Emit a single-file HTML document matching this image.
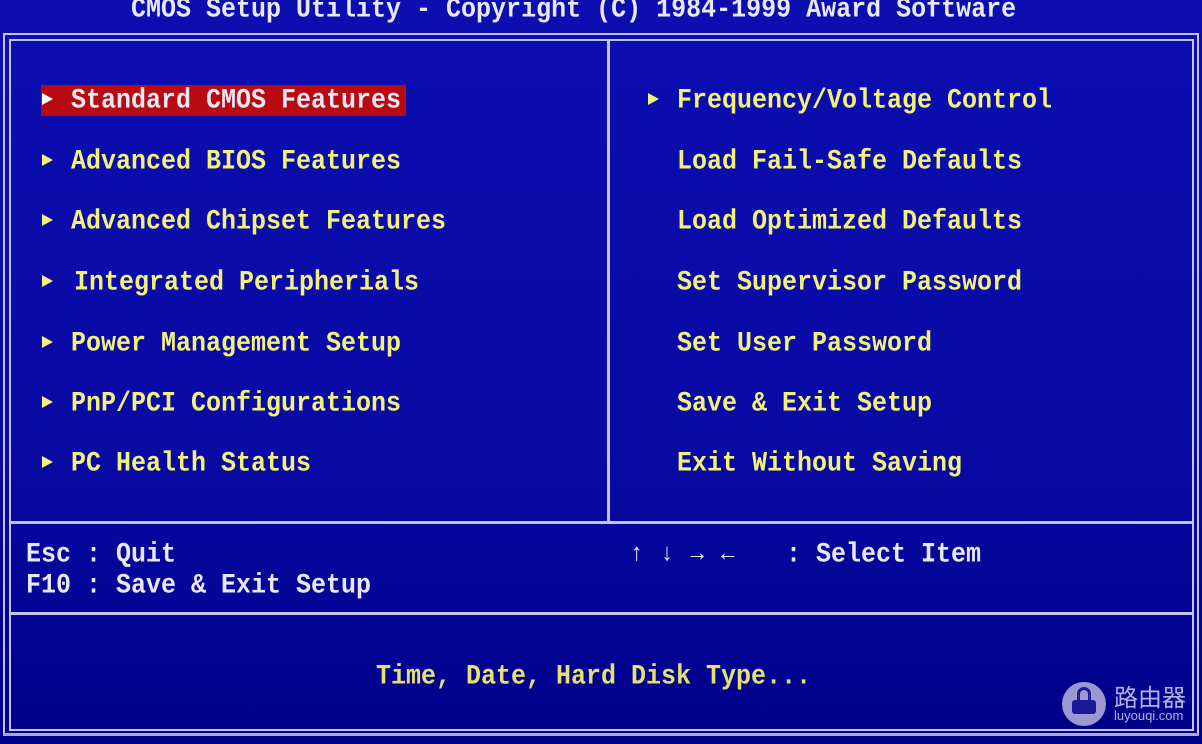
<!DOCTYPE html>
<html><head><meta charset="utf-8"><style>
body{margin:0;width:1202px;height:744px;overflow:hidden;background:linear-gradient(#0c0eb0,#0a0aa4 60%,#00008a);position:relative;font-family:"Liberation Mono",monospace;font-weight:bold;font-size:25px;}
.t{position:absolute;white-space:pre;line-height:30px;color:#f2f27a;transform:scaleY(1.12);margin-top:2px;}
.w{color:#e8e8f4;}
.l{position:absolute;background:#c4c4e4;}
.ar{position:absolute;width:0;height:0;border-top:6px solid transparent;border-bottom:6px solid transparent;border-left:11px solid #f2f27a;}
</style></head><body>
<div class="t w" style="left:131px;top:-7px">CMOS Setup Utility - Copyright (C) 1984-1999 Award Software</div>
<div class="l" style="left:3px;top:33px;width:1196px;height:2px"></div>
<div class="l" style="left:3px;top:33px;width:2px;height:702px"></div>
<div class="l" style="left:1197px;top:33px;width:2px;height:702px"></div>
<div class="l" style="left:3px;top:733px;width:1196px;height:3px;background:#a8a8c8"></div>
<div class="l" style="left:9px;top:39px;width:1184px;height:2px"></div>
<div class="l" style="left:9px;top:39px;width:2px;height:692px"></div>
<div class="l" style="left:1192px;top:39px;width:2px;height:692px"></div>
<div class="l" style="left:9px;top:729px;width:1185px;height:2px"></div>
<div class="l" style="left:607px;top:39px;width:3px;height:484px"></div>
<div class="l" style="left:9px;top:521px;width:1185px;height:3px"></div>
<div class="l" style="left:9px;top:612px;width:1185px;height:3px"></div>
<div style="position:absolute;left:41px;top:85px;width:365px;height:31px;background:#b80a10"></div>
<div class="ar" style="left:42px;top:93px;border-left-color:#fff"></div>
<div class="t w" style="left:71px;top:84px">Standard CMOS Features</div>
<div class="ar" style="left:42px;top:154px"></div><div class="t" style="left:71px;top:145px">Advanced BIOS Features</div>
<div class="ar" style="left:42px;top:214px"></div><div class="t" style="left:71px;top:205px">Advanced Chipset Features</div>
<div class="ar" style="left:42px;top:275px"></div><div class="t" style="left:74px;top:266px">Integrated Peripherials</div>
<div class="ar" style="left:42px;top:336px"></div><div class="t" style="left:71px;top:327px">Power Management Setup</div>
<div class="ar" style="left:42px;top:396px"></div><div class="t" style="left:71px;top:387px">PnP/PCI Configurations</div>
<div class="ar" style="left:42px;top:456px"></div><div class="t" style="left:71px;top:447px">PC Health Status</div>
<div class="ar" style="left:648px;top:93px"></div><div class="t" style="left:677px;top:84px">Frequency/Voltage Control</div>
<div class="t" style="left:677px;top:145px">Load Fail-Safe Defaults</div>
<div class="t" style="left:677px;top:205px">Load Optimized Defaults</div>
<div class="t" style="left:677px;top:266px">Set Supervisor Password</div>
<div class="t" style="left:677px;top:327px">Set User Password</div>
<div class="t" style="left:677px;top:387px">Save &amp; Exit Setup</div>
<div class="t" style="left:677px;top:447px">Exit Without Saving</div>
<div class="t w" style="left:26px;top:538px">Esc : Quit</div>
<div class="t w" style="left:26px;top:569px">F10 : Save &amp; Exit Setup</div>
<div class="t w" style="left:630px;top:538px;font-size:22px;letter-spacing:2px">↑ ↓ → ←</div>
<div class="t w" style="left:786px;top:538px">: Select Item</div>
<div class="t" style="left:376px;top:660px;color:#e6e070">Time, Date, Hard Disk Type...</div>
<div style="position:absolute;left:1062px;top:682px;width:44px;height:44px;border-radius:50%;background:#9a9ad0"></div>
<div style="position:absolute;left:1072px;top:700px;width:24px;height:14px;border-radius:3px;background:#1a1a9a"></div>
<div style="position:absolute;top:687px;width:14px;height:14px;border:3px solid #1a1a9a;border-bottom:none;border-radius:10px 10px 0 0;box-sizing:border-box;left:1077px"></div>
<div style="position:absolute;left:1114px;top:682px;color:#b4b4e4;font:24px 'Noto Sans CJK SC',sans-serif;line-height:28px">路由器</div>
<div style="position:absolute;left:1114px;top:708px;color:#b4b4e4;font:13px 'Liberation Sans',sans-serif">luyouqi.com</div>
</body></html>
